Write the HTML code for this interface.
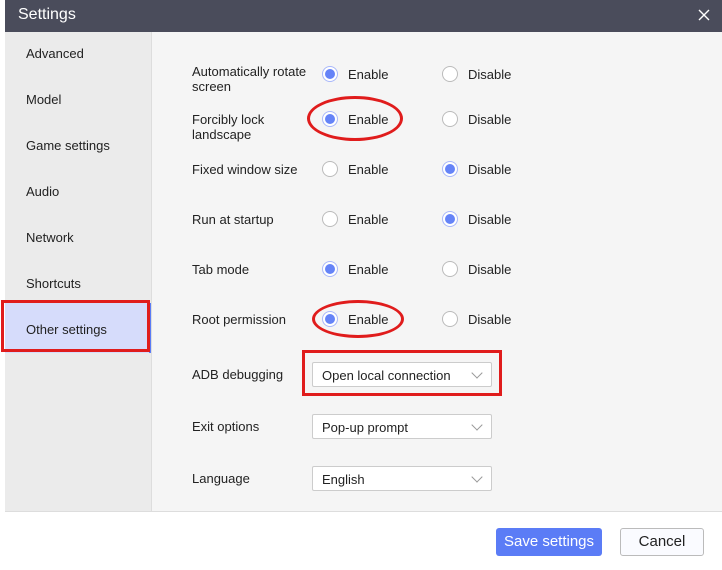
<!DOCTYPE html>
<html><head><style>
body{margin:0;width:722px;height:569px;background:#fff;font-family:"Liberation Sans",sans-serif;position:relative;overflow:hidden;font-size:13px;color:#222}
.a{position:absolute}
.title{left:5px;top:0;width:717px;height:32px;background:#4a4c5b;color:#fff;font-size:16px}
.side{left:5px;top:32px;width:146px;height:479px;background:#ebebeb;border-right:1px solid #ddd}
.main{left:152px;top:32px;width:570px;height:479px;background:#f5f5f5}
.foot{left:5px;top:511px;width:717px;height:58px;background:#fff;border-top:1px solid #ddd}
.r{width:16px;height:16px;border-radius:50%;border:1px solid #bbb;background:#fff;box-sizing:border-box}
.r.on{border-color:#a9b8fa}
.r.on::after{content:"";position:absolute;left:2px;top:2px;width:10px;height:10px;border-radius:50%;background:#6583f7}
.dd{width:180px;height:25px;border:1px solid #ccc;border-radius:2px;background:#fff;box-sizing:border-box;padding:5px 9px;font-size:13px}
.dd::after{content:"";position:absolute;right:10px;top:6px;width:7px;height:7px;border-right:1px solid #999;border-bottom:1px solid #999;transform:rotate(45deg)}
</style></head><body>
<div class="a title"><span class="a" style="left:13px;top:6px">Settings</span>
<svg class="a" style="left:693px;top:9px" width="12" height="12"><path d="M1 1L11 11M11 1L1 11" stroke="#fff" stroke-width="1.4"/></svg></div>
<div class="a side"></div>
<div class="a main"></div>
<div class="a" style="left:26px;top:46px">Advanced</div>
<div class="a" style="left:26px;top:92px">Model</div>
<div class="a" style="left:26px;top:138px">Game settings</div>
<div class="a" style="left:26px;top:184px">Audio</div>
<div class="a" style="left:26px;top:230px">Network</div>
<div class="a" style="left:26px;top:276px">Shortcuts</div>
<div class="a" style="left:5px;top:303px;width:146px;height:50px;background:#d6dcfb;border-right:2px solid #5b7cf6;box-sizing:border-box"></div>
<div class="a" style="left:26px;top:322px">Other settings</div>
<div class="a" style="left:1px;top:300px;width:149px;height:52px;border:3px solid #e01c1c;box-sizing:border-box"></div>

<div class="a" style="left:192px;top:64px;line-height:15px">Automatically rotate<br>screen</div>
<div class="a" style="left:192px;top:112px;line-height:15px">Forcibly lock<br>landscape</div>
<div class="a" style="left:192px;top:162px">Fixed window size</div>
<div class="a" style="left:192px;top:212px">Run at startup</div>
<div class="a" style="left:192px;top:262px">Tab mode</div>
<div class="a" style="left:192px;top:312px">Root permission</div>
<div class="a" style="left:192px;top:367px">ADB debugging</div>
<div class="a" style="left:192px;top:419px">Exit options</div>
<div class="a" style="left:192px;top:471px">Language</div>

<div class="a r on" style="left:322px;top:66px"></div><div class="a" style="left:348px;top:67px">Enable</div>
<div class="a r" style="left:442px;top:66px"></div><div class="a" style="left:468px;top:67px">Disable</div>
<div class="a r on" style="left:322px;top:111px"></div><div class="a" style="left:348px;top:112px">Enable</div>
<div class="a r" style="left:442px;top:111px"></div><div class="a" style="left:468px;top:112px">Disable</div>
<div class="a r" style="left:322px;top:161px"></div><div class="a" style="left:348px;top:162px">Enable</div>
<div class="a r on" style="left:442px;top:161px"></div><div class="a" style="left:468px;top:162px">Disable</div>
<div class="a r" style="left:322px;top:211px"></div><div class="a" style="left:348px;top:212px">Enable</div>
<div class="a r on" style="left:442px;top:211px"></div><div class="a" style="left:468px;top:212px">Disable</div>
<div class="a r on" style="left:322px;top:261px"></div><div class="a" style="left:348px;top:262px">Enable</div>
<div class="a r" style="left:442px;top:261px"></div><div class="a" style="left:468px;top:262px">Disable</div>
<div class="a r on" style="left:322px;top:311px"></div><div class="a" style="left:348px;top:312px">Enable</div>
<div class="a r" style="left:442px;top:311px"></div><div class="a" style="left:468px;top:312px">Disable</div>

<div class="a" style="left:307px;top:96px;width:96px;height:45px;border:3px solid #e01c1c;border-radius:50%;box-sizing:border-box"></div>
<div class="a" style="left:312px;top:300px;width:92px;height:38px;border:3px solid #e01c1c;border-radius:50%;box-sizing:border-box"></div>

<div class="a dd" style="left:312px;top:362px">Open local connection</div>
<div class="a" style="left:302px;top:350px;width:200px;height:46px;border:3px solid #e01c1c;box-sizing:border-box"></div>
<div class="a dd" style="left:312px;top:414px">Pop-up prompt</div>
<div class="a dd" style="left:312px;top:466px">English</div>

<div class="a foot"></div>
<div class="a" style="left:496px;top:528px;width:106px;height:28px;background:#5b7cf6;border-radius:3px;color:#fff;font-size:15px;text-align:center;line-height:28px">Save settings</div>
<div class="a" style="left:620px;top:528px;width:84px;height:28px;background:#fafbff;border:1px solid #bbb;border-radius:3px;box-sizing:border-box;font-size:15px;text-align:center;line-height:26px">Cancel</div>
</body></html>
